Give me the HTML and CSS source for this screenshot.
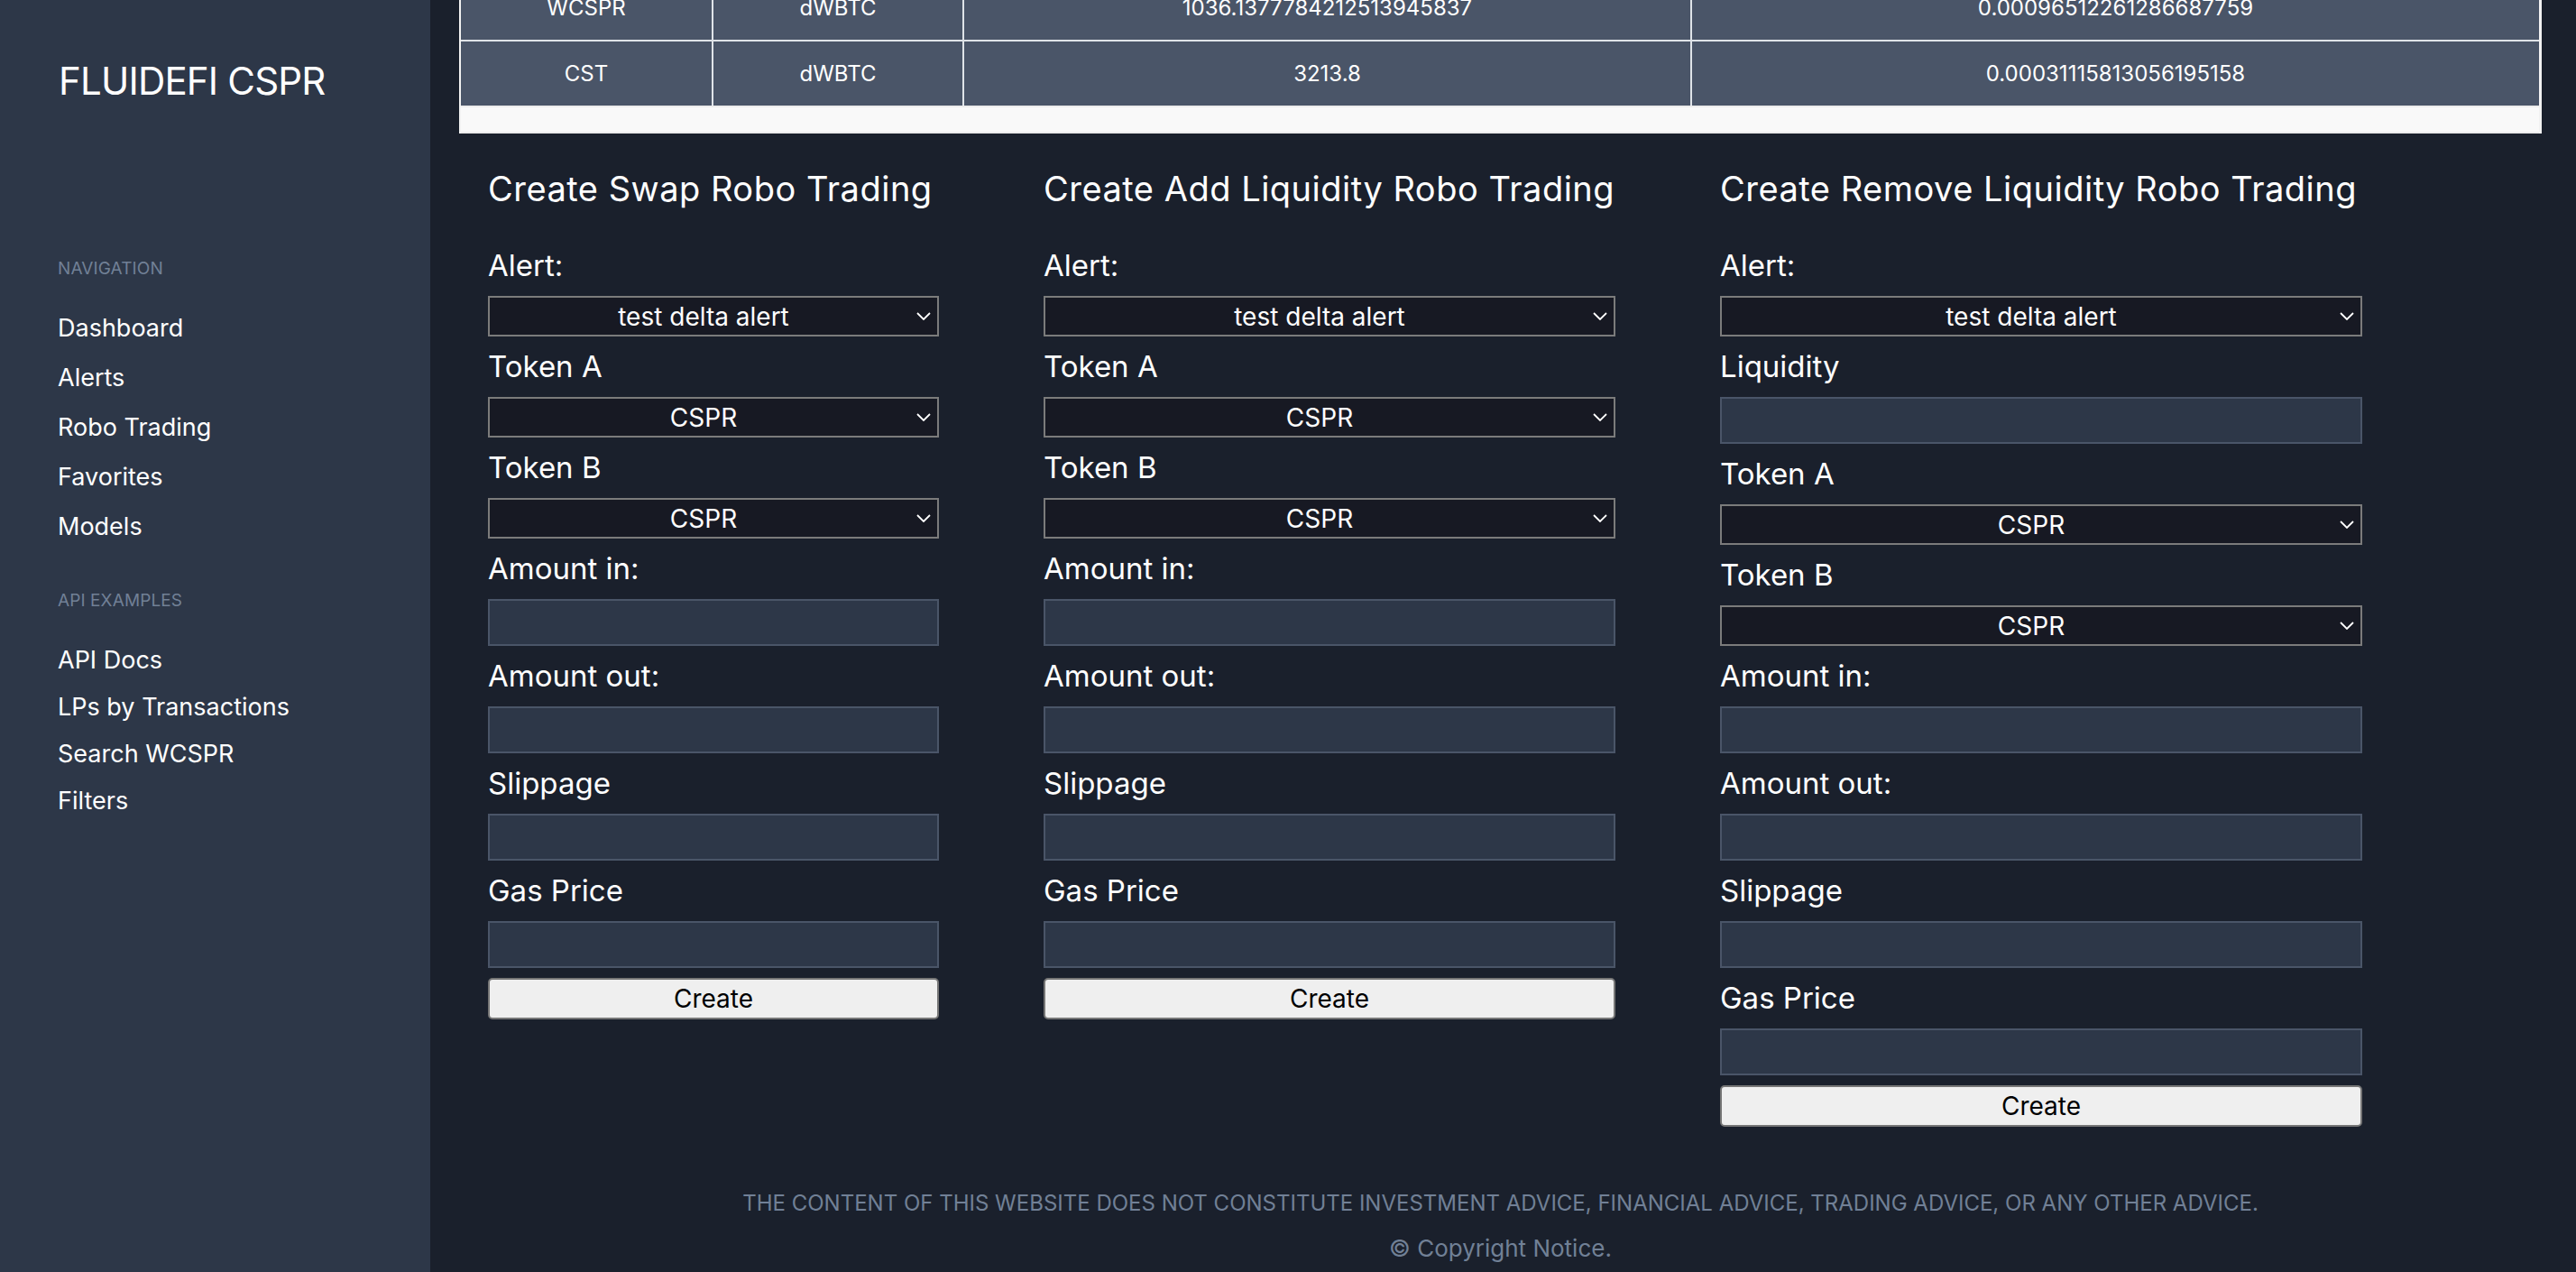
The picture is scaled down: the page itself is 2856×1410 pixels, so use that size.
FILE: index.html
```html
<!DOCTYPE html>
<html lang="en">
<head>
<meta charset="utf-8">
<title>FLUIDEFI CSPR</title>
<link rel="stylesheet" href="styles.css">
</head>
<body>
<div class="layout">
  <aside class="sidebar">
    <div class="brand">FLUIDEFI CSPR</div>
    <div class="nav-heading nav-heading-first">NAVIGATION</div>
    <ul class="nav-list">
      <li><a href="#">Dashboard</a></li>
      <li><a href="#">Alerts</a></li>
      <li><a href="#">Robo Trading</a></li>
      <li><a href="#">Favorites</a></li>
      <li><a href="#">Models</a></li>
    </ul>
    <div class="nav-heading nav-heading-second">API EXAMPLES</div>
    <ul class="nav-list nav-list-api">
      <li><a href="#">API Docs</a></li>
      <li><a href="#">LPs by Transactions</a></li>
      <li><a href="#">Search WCSPR</a></li>
      <li><a href="#">Filters</a></li>
    </ul>
  </aside>

  <main class="main">
    <div class="table-wrap">
      <table class="pairs">
        <colgroup>
          <col class="c1"><col class="c2"><col class="c3"><col class="c4">
        </colgroup>
        <tbody>
          <tr><td>WCSPR</td><td>dWBTC</td><td>1036.1377784212513945837</td><td>0.00096512261286687759</td></tr>
          <tr><td>CST</td><td>dWBTC</td><td>3213.8</td><td>0.00031115813056195158</td></tr>
        </tbody>
      </table>
      <div class="scroll-track"></div>
    </div>

    <div class="forms">
      <section class="form-col col-swap">
        <h2 class="form-title">Create Swap Robo Trading</h2>
        <label class="field-label">Alert:</label>
        <div class="select-wrap">
          <select class="field-select"><option>test delta alert</option></select>
          <svg class="chev" viewBox="0 0 16 9" width="16" height="9"><path d="M1 1 L8 8 L15 1" fill="none" stroke="#ffffff" stroke-width="1.8"/></svg>
        </div>
        <label class="field-label">Token A</label>
        <div class="select-wrap">
          <select class="field-select"><option>CSPR</option></select>
          <svg class="chev" viewBox="0 0 16 9" width="16" height="9"><path d="M1 1 L8 8 L15 1" fill="none" stroke="#ffffff" stroke-width="1.8"/></svg>
        </div>
        <label class="field-label">Token B</label>
        <div class="select-wrap">
          <select class="field-select"><option>CSPR</option></select>
          <svg class="chev" viewBox="0 0 16 9" width="16" height="9"><path d="M1 1 L8 8 L15 1" fill="none" stroke="#ffffff" stroke-width="1.8"/></svg>
        </div>
        <label class="field-label">Amount in:</label>
        <input class="field-input" type="text">
        <label class="field-label">Amount out:</label>
        <input class="field-input" type="text">
        <label class="field-label">Slippage</label>
        <input class="field-input" type="text">
        <label class="field-label">Gas Price</label>
        <input class="field-input" type="text">
        <button class="create-btn" type="button">Create</button>
      </section>

      <section class="form-col col-add">
        <h2 class="form-title">Create Add Liquidity Robo Trading</h2>
        <label class="field-label">Alert:</label>
        <div class="select-wrap">
          <select class="field-select"><option>test delta alert</option></select>
          <svg class="chev" viewBox="0 0 16 9" width="16" height="9"><path d="M1 1 L8 8 L15 1" fill="none" stroke="#ffffff" stroke-width="1.8"/></svg>
        </div>
        <label class="field-label">Token A</label>
        <div class="select-wrap">
          <select class="field-select"><option>CSPR</option></select>
          <svg class="chev" viewBox="0 0 16 9" width="16" height="9"><path d="M1 1 L8 8 L15 1" fill="none" stroke="#ffffff" stroke-width="1.8"/></svg>
        </div>
        <label class="field-label">Token B</label>
        <div class="select-wrap">
          <select class="field-select"><option>CSPR</option></select>
          <svg class="chev" viewBox="0 0 16 9" width="16" height="9"><path d="M1 1 L8 8 L15 1" fill="none" stroke="#ffffff" stroke-width="1.8"/></svg>
        </div>
        <label class="field-label">Amount in:</label>
        <input class="field-input" type="text">
        <label class="field-label">Amount out:</label>
        <input class="field-input" type="text">
        <label class="field-label">Slippage</label>
        <input class="field-input" type="text">
        <label class="field-label">Gas Price</label>
        <input class="field-input" type="text">
        <button class="create-btn" type="button">Create</button>
      </section>

      <section class="form-col col-remove">
        <h2 class="form-title">Create Remove Liquidity Robo Trading</h2>
        <label class="field-label">Alert:</label>
        <div class="select-wrap">
          <select class="field-select"><option>test delta alert</option></select>
          <svg class="chev" viewBox="0 0 16 9" width="16" height="9"><path d="M1 1 L8 8 L15 1" fill="none" stroke="#ffffff" stroke-width="1.8"/></svg>
        </div>
        <label class="field-label">Liquidity</label>
        <input class="field-input" type="text">
        <label class="field-label">Token A</label>
        <div class="select-wrap">
          <select class="field-select"><option>CSPR</option></select>
          <svg class="chev" viewBox="0 0 16 9" width="16" height="9"><path d="M1 1 L8 8 L15 1" fill="none" stroke="#ffffff" stroke-width="1.8"/></svg>
        </div>
        <label class="field-label">Token B</label>
        <div class="select-wrap">
          <select class="field-select"><option>CSPR</option></select>
          <svg class="chev" viewBox="0 0 16 9" width="16" height="9"><path d="M1 1 L8 8 L15 1" fill="none" stroke="#ffffff" stroke-width="1.8"/></svg>
        </div>
        <label class="field-label">Amount in:</label>
        <input class="field-input" type="text">
        <label class="field-label">Amount out:</label>
        <input class="field-input" type="text">
        <label class="field-label">Slippage</label>
        <input class="field-input" type="text">
        <label class="field-label">Gas Price</label>
        <input class="field-input" type="text">
        <button class="create-btn" type="button">Create</button>
      </section>
    </div>

    <footer class="footer">
      <p class="disclaimer">THE CONTENT OF THIS WEBSITE DOES NOT CONSTITUTE INVESTMENT ADVICE, FINANCIAL ADVICE, TRADING ADVICE, OR ANY OTHER ADVICE.</p>
      <p class="copyright">© Copyright Notice.</p>
    </footer>
  </main>
</div>
</body>
</html>
```

FILE: styles.css
```css
* { box-sizing: border-box; }

html, body {
  margin: 0;
  padding: 0;
  height: 100%;
  overflow: hidden;
  background: #1a202c;
  font-family: Inter, "Open Sans", "Liberation Sans", sans-serif;
  color: #ffffff;
}

.layout {
  display: flex;
  height: 1410px;
}

/* ---------- Sidebar ---------- */
.sidebar {
  width: 477px;
  flex: none;
  background: #2d3748;
  padding: 60px 0 0 64px;
}

.brand {
  font-size: 42px;
  line-height: 60px;
  letter-spacing: -0.8px;
  padding-left: 1px;
  color: #ffffff;
}

.nav-heading {
  font-size: 19px;
  line-height: 24px;
  color: #718096;
  letter-spacing: 0.1px;
}

.nav-heading-first { margin-top: 166px; }
.nav-heading-second { margin-top: 43px; }

.nav-list {
  list-style: none;
  margin: 26px 0 0;
  padding: 0;
}

.nav-list li {
  font-size: 27px;
  line-height: 55px;
}

.nav-list-api { margin-top: 28px; }
.nav-list-api li { line-height: 52px; }

.nav-list a {
  color: #ffffff;
  text-decoration: none;
}

/* ---------- Main ---------- */
.main {
  flex: 1;
  min-width: 0;
  padding: 0 38px 0 32px;
  display: flex;
  flex-direction: column;
}

.table-wrap {
  margin-top: -27px;
  background: #f8f8f8;
  border-left: 2px solid #f2f2f2;
  border-right: 3px solid #f2f2f2;
}

.pairs {
  width: 100%;
  border-collapse: collapse;
  table-layout: fixed;
  background: #4a5568;
}

.pairs .c1 { width: 279px; }
.pairs .c2 { width: 278px; }
.pairs .c3 { width: 807px; }
.pairs .c4 { width: 940px; }

.pairs td {
  height: 72px;
  padding: 0;
  text-align: center;
  vertical-align: middle;
  font-size: 24px;
  color: #ffffff;
  border: 2px solid #dfe3e8;
  border-top: 0;
}

.pairs td:first-child { border-left: 0; }
.pairs td:last-child { border-right: 0; }
.pairs tr:last-child td { border-bottom: 0; }

.scroll-track {
  height: 31px;
  background: #f9f9f9;
  border-top: 2px solid #ececec;
  border-bottom: 2px solid #ececec;
}

/* ---------- Forms ---------- */
.forms {
  display: flex;
  gap: 116px;
  padding-left: 32px;
  margin-top: 37px;
  align-items: flex-start;
}

.form-col {
  display: flex;
  flex-direction: column;
}

.col-swap { width: 500px; }
.col-add { width: 634px; }
.col-remove { width: 712px; }

.form-title {
  margin: 0 0 39px;
  font-size: 38px;
  line-height: 48px;
  font-weight: 400;
  white-space: nowrap;
  letter-spacing: 0.5px;
}

.field-label {
  display: block;
  font-size: 33px;
  line-height: 45px;
  margin-bottom: 11px;
}

.select-wrap {
  position: relative;
  margin-bottom: 11px;
}

.field-select {
  -webkit-appearance: none;
  appearance: none;
  display: block;
  width: 100%;
  height: 45px;
  margin: 0;
  padding: 0 30px 0 8px;
  background: #171923;
  border: 2px solid #7b7b7b;
  border-radius: 0;
  color: #ffffff;
  font-family: Inter, "Open Sans", "Liberation Sans", sans-serif;
  font-size: 28px;
  text-align: center;
  text-align-last: center;
}

.chev {
  position: absolute;
  right: 9px;
  top: 18px;
  width: 16px;
  height: 9px;
}

.field-input {
  display: block;
  width: 100%;
  height: 52px;
  margin: 0 0 11px;
  padding: 0 8px;
  background: #2d3748;
  border: 2px solid #4a5568;
  border-radius: 0;
  color: #ffffff;
  font-size: 28px;
}

.create-btn {
  display: block;
  width: 100%;
  height: 46px;
  margin: 0;
  padding: 0;
  background: #efefef;
  border: 2px solid #767676;
  border-radius: 5px;
  color: #000000;
  font-family: Inter, "Open Sans", "Liberation Sans", sans-serif;
  font-size: 28px;
}

/* ---------- Footer ---------- */
.footer {
  margin-top: 67px;
  text-align: center;
  color: #718096;
}

.disclaimer {
  margin: 0;
  font-size: 24px;
  line-height: 36px;
  letter-spacing: 0;
}

.copyright {
  margin: 14px 0 0;
  font-size: 26px;
  line-height: 36px;
}
```
